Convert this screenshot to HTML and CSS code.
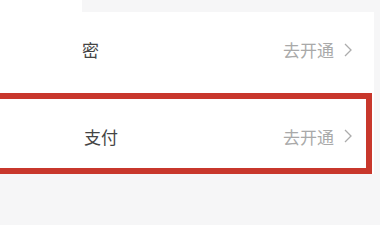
FILE: index.html
```html
<!DOCTYPE html>
<html lang="zh-CN">
<head>
  <meta charset="UTF-8" />
  <title>设置</title>
  <link rel="stylesheet" href="styles.css">
</head>
<body>
  <div class="top-strip"><div class="strip-line"></div></div>

  <div class="list">
    <div class="row">
      <span class="label">密</span>
      <span class="action">去开通
        <svg class="chevron" viewBox="0 0 8 14"><polyline points="1,1 7,7 1,13" /></svg>
      </span>
    </div>
    <div class="row highlighted">
      <span class="label">支付</span>
      <span class="action">去开通
        <svg class="chevron" viewBox="0 0 8 14"><polyline points="1,1 7,7 1,13" /></svg>
      </span>
    </div>
  </div>
</body>
</html>
```

FILE: styles.css
```css
* { margin: 0; padding: 0; box-sizing: border-box; }

body {
  background-color: #f6f6f7;
  font-family: "Noto Sans CJK SC", "Noto Sans", sans-serif;
  overflow: hidden;
  width: 380px;
  height: 225px;
}

.top-strip {
  width: 374px;
  height: 12px;
  background-color: #fff;
}

.strip-line {
  margin-left: 82px;
  height: 12px;
  background-color: #f6f6f7;
}

.list {
  width: 374px;
  background-color: #fff;
}

.row {
  height: 81px;
  display: flex;
  align-items: center;
  justify-content: space-between;
  padding: 0 22px 6px 82px;
  font-size: 17px;
}

.label {
  color: #444;
}

.action {
  display: flex;
  align-items: center;
  gap: 10px;
  color: #a9a9a9;
}

.chevron {
  width: 8px;
  height: 14px;
  fill: none;
  stroke: #acacac;
  stroke-width: 1.3;
}

/* red highlight box around the payment row */
.highlighted {
  width: 378px;
  margin-left: -6px;
  border: 6px solid #c8372c;
  padding: 5px 14px 0 84px;
  background-color: #fff;
}
```
